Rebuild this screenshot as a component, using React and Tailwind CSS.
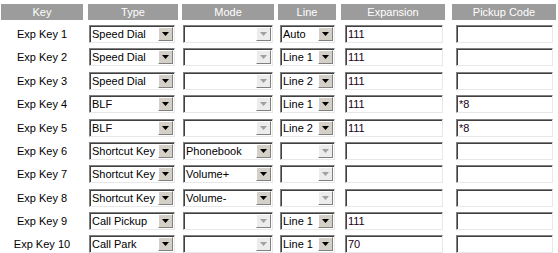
import React from "react";

const rows = [
  { key: "Exp Key 1", type: "Speed Dial", mode: "", line: "Auto", exp: "111", pick: "", h: "h-[23px]" },
  { key: "Exp Key 2", type: "Speed Dial", mode: "", line: "Line 1", exp: "111", pick: "", h: "h-[24px]" },
  { key: "Exp Key 3", type: "Speed Dial", mode: "", line: "Line 2", exp: "111", pick: "", h: "h-[23px]" },
  { key: "Exp Key 4", type: "BLF", mode: "", line: "Line 1", exp: "111", pick: "*8", h: "h-[24px]" },
  { key: "Exp Key 5", type: "BLF", mode: "", line: "Line 2", exp: "111", pick: "*8", h: "h-[23px]" },
  { key: "Exp Key 6", type: "Shortcut Key", mode: "Phonebook", line: null, exp: "", pick: "", h: "h-[23px]" },
  { key: "Exp Key 7", type: "Shortcut Key", mode: "Volume+", line: null, exp: "", pick: "", h: "h-[24px]" },
  { key: "Exp Key 8", type: "Shortcut Key", mode: "Volume-", line: null, exp: "", pick: "", h: "h-[23px]" },
  { key: "Exp Key 9", type: "Call Pickup", mode: "", line: "Line 1", exp: "111", pick: "", h: "h-[23px]" },
  { key: "Exp Key 10", type: "Call Park", mode: "", line: "Line 1", exp: "70", pick: "", h: "h-[24px]" },
];

function Arrow({ disabled }) {
  return (
    <svg width="7" height="4" viewBox="0 0 7 4">
      <path d="M0 0H7L3.5 4Z" fill={disabled ? "#a0a0a0" : "#000"} />
    </svg>
  );
}

function Select({ value, disabled, w }) {
  return (
    <div
      className={`${w} h-[18px] flex items-stretch bg-white border-t-[#808080] border-l-[#808080] border-r-[#e8e8e8] border-b-[#e8e8e8] border shadow-[inset_1px_1px_0_#404040]`}
    >
      <div className="flex-1 pl-[2px] pt-[1px] leading-[14px] text-black overflow-hidden whitespace-nowrap">
        {value}
      </div>
      <div
        className={`w-[15px] my-[1px] mr-[1px] flex items-center justify-center ${
          disabled ? "bg-[#ececec]" : "bg-[#d4d0c8]"
        } border border-t-white border-l-white border-r-[#808080] border-b-[#808080]`}
      >
        <Arrow disabled={disabled} />
      </div>
    </div>
  );
}

function Input({ value, w }) {
  return (
    <div
      className={`${w} h-[18px] bg-white border border-t-[#808080] border-l-[#808080] border-r-[#e8e8e8] border-b-[#e8e8e8] shadow-[inset_1px_1px_0_#404040] pl-[2px] pt-[1px] leading-[14px] text-[#200020]`}
    >
      {value}
    </div>
  );
}

function H({ children, cls }) {
  return (
    <div className={`${cls} h-[16px] bg-[#9c9c9c] text-white text-center leading-[16px]`}>
      {children}
    </div>
  );
}

export default function App() {
  return (
    <div
      className="w-[558px] h-[253px] bg-white text-[11px] overflow-hidden pt-[4px]"
      style={{ fontFamily: '"Liberation Sans", Arial, sans-serif' }}
    >
      <div className="flex">
        <div className="w-[86px] pl-[1px]"><H cls="w-[82px]">Key</H></div>
        <div className="w-[94px] pl-[2px]"><H cls="w-[90px]">Type</H></div>
        <div className="w-[96px] pl-[2px]"><H cls="w-[92px]">Mode</H></div>
        <div className="w-[63px] pl-[2px]"><H cls="w-[58px]">Line</H></div>
        <div className="w-[111px] pl-[2px]"><H cls="w-[104px]">Expansion</H></div>
        <div className="w-[108px] pl-[2px]"><H cls="w-[104px]">Pickup Code</H></div>
      </div>
      <div className="pt-[5px]">
        {rows.map((r) => (
          <div key={r.key} className={`flex items-start ${r.h}`}>
            <div className="w-[86px] pl-[1px]">
              <div className="w-[82px] text-center leading-[18px] text-black">{r.key}</div>
            </div>
            <div className="w-[94px] pl-[3px]">
              <Select value={r.type} w="w-[86px]" />
            </div>
            <div className="w-[96px] pl-[3px]">
              <Select value={r.mode} w="w-[90px]" disabled={r.mode === ""} />
            </div>
            <div className="w-[63px] pl-[4px]">
              <Select value={r.line || ""} w="w-[55px]" disabled={r.line === null} />
            </div>
            <div className="w-[111px] pl-[6px]">
              <Input value={r.exp} w="w-[98px]" />
            </div>
            <div className="w-[108px] pl-[6px]">
              <Input value={r.pick} w="w-[97px]" />
            </div>
          </div>
        ))}
      </div>
    </div>
  );
}
